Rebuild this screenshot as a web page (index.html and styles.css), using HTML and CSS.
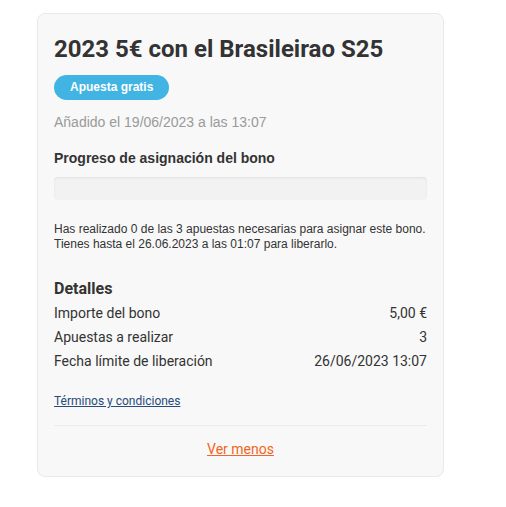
FILE: index.html
```html
<!DOCTYPE html>
<html lang="es">
<head>
    <meta charset="UTF-8">
    <meta name="viewport" content="width=device-width, initial-scale=1.0">
    <title>Bono</title>
    <link rel="stylesheet" href="styles.css">
</head>
<body>
    <div class="bonus-card">
        <h1 class="bonus-title">2023 5€ con el Brasileirao S25</h1>
        <span class="badge">Apuesta gratis</span>
        <p class="added">Añadido el 19/06/2023 a las 13:07</p>

        <h2 class="progress-title">Progreso de asignación del bono</h2>
        <div class="progress-bar"><div class="progress-fill"></div></div>
        <p class="progress-text">
            Has realizado 0 de las 3 apuestas necesarias para asignar este bono.<br>
            Tienes hasta el 26.06.2023 a las 01:07 para liberarlo.
        </p>

        <h3 class="details-title">Detalles</h3>
        <div class="details-row"><span>Importe del bono</span><span>5,00 €</span></div>
        <div class="details-row"><span>Apuestas a realizar</span><span>3</span></div>
        <div class="details-row"><span>Fecha límite de liberación</span><span>26/06/2023 13:07</span></div>

        <a class="terms" href="#">Términos y condiciones</a>

        <div class="card-footer">
            <a class="toggle" href="#">Ver menos</a>
        </div>
    </div>
</body>
</html>
```

FILE: styles.css
```css
/* General Styles */
body {
    margin: 0;
    padding: 13px 0 0 37px;
    background-color: #fff;
    font-family: Roboto, Arial, sans-serif;
    color: #333;
}

/* Card */
.bonus-card {
    width: 373px;
    padding: 16px 16px 0 16px;
    background-color: #f8f8f8;
    border: 1px solid #e9e9e9;
    border-radius: 8px;
}

.bonus-title {
    margin: 0;
    padding-top: 4px;
    font-size: 24px;
    line-height: 30px;
    font-weight: 700;
    color: #333;
}

/* Badge */
.badge {
    display: inline-block;
    margin-top: 11px;
    padding: 0 16px;
    height: 25px;
    line-height: 25px;
    border-radius: 13px;
    background-color: #41b4e4;
    color: #fff;
    font-family: "Liberation Sans", Arial, sans-serif;
    font-size: 12px;
    font-weight: 700;
}

.added {
    margin: 12px 0 0 0;
    font-family: "Liberation Sans", Arial, sans-serif;
    font-size: 14px;
    line-height: 20px;
    color: #9a9a9a;
}

/* Progress */
.progress-title {
    margin: 16px 0 0 0;
    font-family: "Liberation Sans", Arial, sans-serif;
    font-size: 14px;
    line-height: 20px;
    font-weight: 700;
    color: #333;
}

.progress-bar {
    margin-top: 9px;
    height: 23px;
    background-color: #f2f2f2;
    border-radius: 4px;
    box-shadow: inset 0 1px 2px rgba(0, 0, 0, 0.08);
    overflow: hidden;
}

.progress-fill {
    width: 0;
    height: 100%;
}

.progress-text {
    margin: 22px 0 0 0;
    font-family: "Liberation Sans", Arial, sans-serif;
    font-size: 12px;
    line-height: 15px;
    color: #333;
}

/* Details */
.details-title {
    margin: 27px 0 2px 0;
    font-size: 16px;
    line-height: 20px;
    font-weight: 700;
    color: #333;
}

.details-row {
    display: flex;
    justify-content: space-between;
    font-size: 14px;
    line-height: 24px;
    color: #333;
}

.terms {
    display: inline-block;
    margin-top: 20px;
    font-size: 12px;
    line-height: 16px;
    color: #274b7a;
}

/* Footer */
.card-footer {
    margin-top: 16px;
    border-top: 1px solid #ebebeb;
    padding: 13px 0 17px 0;
    text-align: center;
}

.toggle {
    font-size: 14px;
    line-height: 20px;
    color: #f26522;
}
```
